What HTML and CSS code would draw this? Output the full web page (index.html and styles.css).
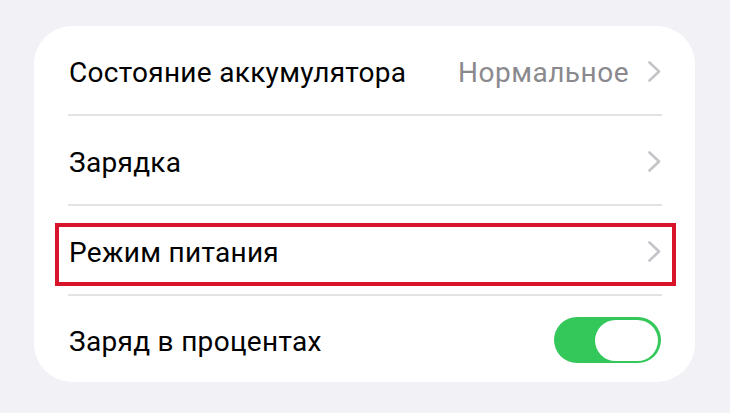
FILE: index.html
```html
<!DOCTYPE html>
<html lang="ru">
<head>
<meta charset="utf-8">
<link rel="stylesheet" href="styles.css">
</head>
<body>
<div class="card">
  <div class="row">
    <div class="inner">
      <span class="label">Состояние аккумулятора</span>
      <span class="value">Нормальное</span>
      <svg class="chev" width="13" height="21" viewBox="0 0 13 21"><path d="M1.5 1.5 L11 10.5 L1.5 19.5" fill="none" stroke="#c5c5c9" stroke-width="2.6" stroke-linecap="round" stroke-linejoin="round"/></svg>
    </div>
  </div>
  <div class="row">
    <div class="inner">
      <span class="label">Зарядка</span>
      <svg class="chev" width="13" height="21" viewBox="0 0 13 21"><path d="M1.5 1.5 L11 10.5 L1.5 19.5" fill="none" stroke="#c5c5c9" stroke-width="2.6" stroke-linecap="round" stroke-linejoin="round"/></svg>
    </div>
  </div>
  <div class="row highlighted">
    <div class="inner">
      <span class="label">Режим питания</span>
      <svg class="chev" width="13" height="21" viewBox="0 0 13 21"><path d="M1.5 1.5 L11 10.5 L1.5 19.5" fill="none" stroke="#c5c5c9" stroke-width="2.6" stroke-linecap="round" stroke-linejoin="round"/></svg>
    </div>
    <div class="redbox"></div>
  </div>
  <div class="row last">
    <div class="inner">
      <span class="label">Заряд в процентах</span>
      <span class="toggle"><span class="knob"></span></span>
    </div>
  </div>
</div>
</body>
</html>
```

FILE: styles.css
```css
html, body {
  margin: 0;
  padding: 0;
  background: #f1f1f6;
  width: 730px;
  height: 413px;
  overflow: hidden;
}
body {
  padding-top: 26px;
  box-sizing: border-box;
  font-family: Roboto, "Liberation Sans", sans-serif;
}
.card {
  margin: 0 35px 0 34px;
  background: #ffffff;
  border-radius: 38px;
  height: 356px;
  display: flex;
  flex-direction: column;
}
.row {
  position: relative;
  padding-left: 34px;
  display: flex;
  height: 90px;
  box-sizing: border-box;
}
.row.last {
  height: 86px;
}
.inner {
  flex: 1;
  display: flex;
  align-items: center;
  border-bottom: 2px solid #e3e3e6;
  margin-right: 33px;
  padding-right: 1px;
}
.row.last .inner {
  border-bottom: none;
}
.label {
  flex: 1;
  font-size: 28px;
  letter-spacing: 0.3px;
  color: #000;
  padding-left: 1px;
  padding-top: 4px;
}
.value {
  font-size: 28px;
  letter-spacing: 0.5px;
  color: #8a8a8e;
  margin-right: 19px;
  padding-top: 4px;
}
.chev {
  display: block;
  margin-top: 2px;
}
.redbox {
  position: absolute;
  left: 21px;
  top: 17px;
  width: 621px;
  height: 63px;
  border: 4px solid #d8142a;
  box-sizing: border-box;
}
.toggle {
  width: 107px;
  height: 46px;
  border-radius: 23px;
  background: #34c759;
  display: flex;
  align-items: center;
  justify-content: flex-end;
  padding-right: 3px;
  box-sizing: border-box;
  margin-top: 2px;
}
.knob {
  width: 63px;
  height: 41px;
  border-radius: 21px;
  background: #fff;
}
```
